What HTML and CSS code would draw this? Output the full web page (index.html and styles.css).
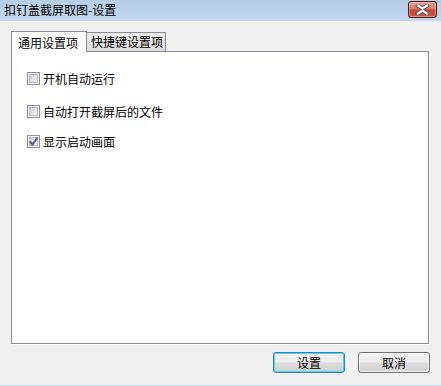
FILE: index.html
```html
<!DOCTYPE html>
<html lang="zh-CN">
<head>
<meta charset="utf-8">
<title>扣钉盖截屏取图-设置</title>
<link rel="stylesheet" href="styles.css">
</head>
<body>
<div class="window">
  <div class="titlebar">
    <span class="title">扣钉盖截屏取图-设置</span>
    <div class="close">
      <svg width="19" height="11" viewBox="0 0 19 11">
        <path d="M5 1.5 L9.5 4.5 L14 1.5 M5 9.5 L9.5 6.5 L14 9.5" stroke="#5a4040" stroke-width="4" fill="none" stroke-linecap="square"/>
        <path d="M5 1.5 L9.5 4.5 L14 1.5 M5 9.5 L9.5 6.5 L14 9.5" stroke="#ffffff" stroke-width="2.2" fill="none" stroke-linecap="square"/>
      </svg>
    </div>
  </div>
  <div class="content">
    <div class="tabs">
      <div class="tab active">通用设置项</div>
      <div class="tab">快捷键设置项</div>
    </div>
    <div class="panel">
      <label class="opt"><span class="box"></span><span>开机自动运行</span></label>
      <label class="opt"><span class="box"></span><span>自动打开截屏后的文件</span></label>
      <label class="opt last"><span class="box checked"><svg width="11" height="11" viewBox="0 0 11 11"><path d="M2 5.5 L4.5 8.5 L9.5 1.5" stroke="#4b5f98" stroke-width="2" fill="none"/></svg></span><span>显示启动画面</span></label>
    </div>
    <div class="buttons">
      <button class="btn default">设置</button>
      <button class="btn">取消</button>
    </div>
  </div>
</div>
</body>
</html>
```
FILE: styles.css
```css
* { box-sizing: border-box; }
html, body { margin: 0; padding: 0; }
body {
  width: 441px;
  height: 386px;
  overflow: hidden;
  font-family: "Noto Sans CJK SC", "Microsoft YaHei", sans-serif;
  font-size: 12px;
  color: #000;
}
.window {
  width: 441px;
  height: 386px;
  display: flex;
  flex-direction: column;
  background: #f0f0f0;
  border-bottom: 1px solid #c3d6ec;
}
.titlebar {
  height: 21px;
  flex: none;
  display: flex;
  align-items: flex-start;
  justify-content: space-between;
  padding: 0 4px 0 4px;
  background: linear-gradient(#b6cde7, #c3d7ee);
}
.title {
  line-height: 20px;
  font-size: 12px;
}
.close {
  margin-top: 1px;
  width: 29px;
  height: 17px;
  border: 1px solid #4a1a1e;
  border-radius: 3px;
  background: linear-gradient(#e9a797 0%, #d77a68 45%, #c04a38 55%, #c85a45 100%);
  display: flex;
  align-items: center;
  justify-content: center;
  box-shadow: inset 0 0 0 1px rgba(255,200,190,0.5);
}
.close svg { display: block; }
.content {
  flex: 1;
  display: flex;
  flex-direction: column;
  padding: 11px 12px 0 11px;
}
.tabs {
  display: flex;
  align-items: flex-end;
  height: 20px;
  position: relative;
  z-index: 1;
  margin-bottom: -1px;
}
.tab {
  height: 19px;
  padding: 0 3px 0 4px;
  line-height: 17px;
  border: 1px solid #898c95;
  border-bottom: none;
  background: linear-gradient(#ececec, #dcdcdc);
  white-space: nowrap;
}
.tab.active {
  height: 21px;
  width: 76px;
  padding: 0 0 0 6px;
  line-height: 21px;
  background: #fff;
  border-right: 1px solid #898c95;
  margin-right: -1px;
  position: relative;
  z-index: 2;
}
.tab + .tab {
  width: 80px;
  padding-left: 4px;
  margin-bottom: 1px;
  border-bottom: none;
}
.panel {
  width: 418px;
  height: 293px;
  border: 1px solid #898c95;
  background: #fff;
  padding: 20px 15px;
  display: flex;
  flex-direction: column;
  align-items: flex-start;
  box-shadow: 1px 1px 0 #fbfbfb;
}
.opt {
  display: flex;
  align-items: center;
  gap: 3px;
  height: 13px;
  line-height: 13px;
}
.opt + .opt { margin-top: 20px; }
.opt.last { margin-top: 17px; }
.box {
  width: 13px;
  height: 13px;
  border: 1px solid #8e8f8f;
  background: #fff;
  display: flex;
  align-items: center;
  justify-content: center;
  position: relative;
}
.box::before {
  content: "";
  position: absolute;
  inset: 1px;
  background: linear-gradient(135deg, #c9d0d9, #f4f6f8);
  border: 1px solid #aeb6c2;
}
.box svg { position: relative; z-index: 1; display: block; }
.buttons {
  display: flex;
  justify-content: flex-end;
  gap: 13px;
  margin-top: 8px;
  margin-right: -1px;
}
.btn {
  width: 72px;
  height: 21px;
  font-family: inherit;
  font-size: 12px;
  color: #000;
  border: 1px solid #707070;
  border-radius: 3px;
  background: linear-gradient(#f2f2f2 0%, #ebebeb 48%, #dddddd 52%, #cfcfcf 100%);
  box-shadow: inset 0 0 0 1px rgba(255,255,255,0.7);
  padding: 0;
  line-height: 19px;
}
.btn.default {
  border-color: #3c7fb1;
  box-shadow: inset 0 0 0 1px #48d8fb;
}
```
